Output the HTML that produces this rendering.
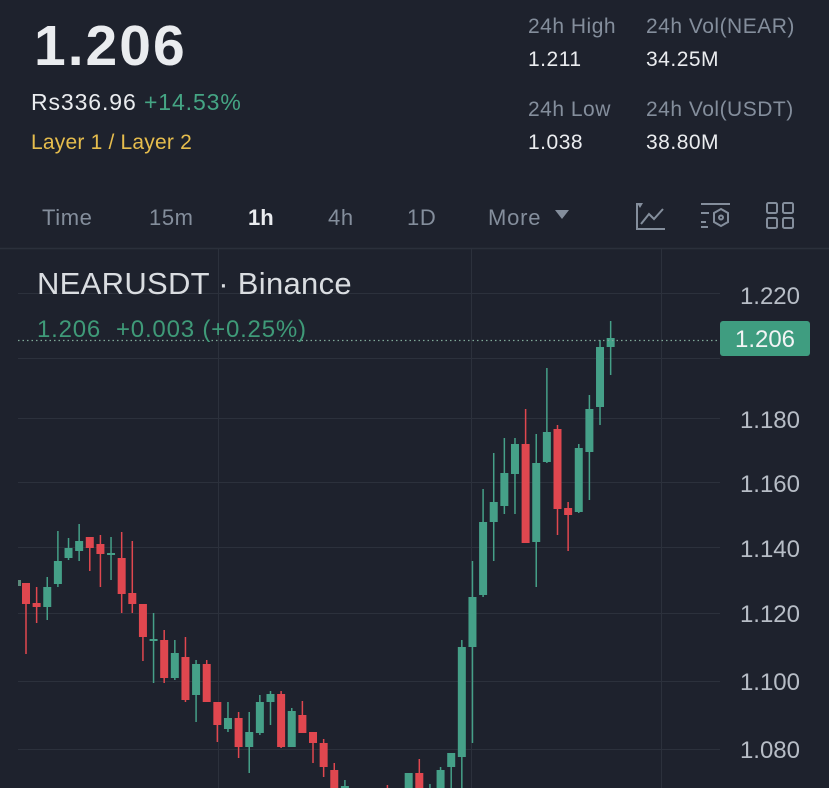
<!DOCTYPE html>
<html><head><meta charset="utf-8">
<style>
body{margin:0;width:829px;height:788px;background:#1e222d;overflow:hidden;font-family:"Liberation Sans",sans-serif;position:relative}
.a{position:absolute;white-space:nowrap}
.g{color:#848e9c}
.s{font-size:21px;letter-spacing:0.5px}
</style></head><body>
<div class="a" style="left:34px;top:13px;font-size:57px;font-weight:bold;color:#eaecef;letter-spacing:2px">1.206</div>
<div class="a" style="left:31px;top:89px;font-size:23px;letter-spacing:0.9px;color:#eaecef">Rs336.96 <span style="color:#45a584">+14.53%</span></div>
<div class="a" style="left:31px;top:131px;font-size:21px;letter-spacing:0.2px;color:#e6bd4d">Layer 1 / Layer 2</div>
<div class="a g s" style="left:528px;top:15px">24h High</div>
<div class="a g s" style="left:646px;top:15px">24h Vol(NEAR)</div>
<div class="a s" style="left:528px;top:48px;color:#eaecef">1.211</div>
<div class="a s" style="left:646px;top:48px;color:#eaecef">34.25M</div>
<div class="a g s" style="left:528px;top:98px">24h Low</div>
<div class="a g s" style="left:646px;top:98px">24h Vol(USDT)</div>
<div class="a s" style="left:528px;top:131px;color:#eaecef">1.038</div>
<div class="a s" style="left:646px;top:131px;color:#eaecef">38.80M</div>

<div class="a g" style="left:42px;top:205px;font-size:22px;letter-spacing:0.6px">Time</div>
<div class="a g" style="left:149px;top:205px;font-size:22px;letter-spacing:0.6px">15m</div>
<div class="a" style="left:248px;top:205px;font-size:22px;color:#eaecef;font-weight:bold">1h</div>
<div class="a g" style="left:328px;top:205px;font-size:22px;letter-spacing:0.6px">4h</div>
<div class="a g" style="left:407px;top:205px;font-size:22px;letter-spacing:0.6px">1D</div>
<div class="a g" style="left:488px;top:205px;font-size:22px;letter-spacing:0.8px">More</div>
<svg class="a" style="left:0;top:0" width="829" height="788">
<polygon points="555,210 569,210 562,219" fill="#848e9c"/>
<g stroke="#848e9c" stroke-width="2" fill="none">
<path d="M637,203 V229 H665 M641,224 L649,214 L654,219 L663,209"/>
<polygon points="637,203 643,203 640,208" fill="#848e9c" stroke="none"/>
<path d="M701,204 H730 M701,213 H709 M701,222 H706 M701,227 H708"/>
<polygon points="721,209 728,213 728,222 721,226 714,222 714,213"/>
<circle cx="721" cy="217.5" r="2"/>
<rect x="767" y="203" width="10" height="10" rx="1.5"/><rect x="783" y="203" width="10" height="10" rx="1.5"/>
<rect x="767" y="218" width="10" height="10" rx="1.5"/><rect x="783" y="218" width="10" height="10" rx="1.5"/>
</g>
<line x1="0" y1="248.5" x2="829" y2="248.5" stroke="#2b303b" stroke-width="1.5"/>
<g stroke="#2c313c" stroke-width="1">
<line x1="218.5" y1="249" x2="218.5" y2="788"/><line x1="471.5" y1="249" x2="471.5" y2="788"/><line x1="661.5" y1="249" x2="661.5" y2="788"/>
<line x1="18" y1="293.5" x2="720" y2="293.5"/><line x1="18" y1="358.5" x2="720" y2="358.5"/>
<line x1="18" y1="418.5" x2="720" y2="418.5"/><line x1="18" y1="482.5" x2="720" y2="482.5"/>
<line x1="18" y1="547.5" x2="720" y2="547.5"/><line x1="18" y1="613.5" x2="720" y2="613.5"/>
<line x1="18" y1="681.5" x2="720" y2="681.5"/><line x1="18" y1="749.5" x2="720" y2="749.5"/>
</g>
<g id="c"></g>
<line x1="18" y1="340.5" x2="720" y2="340.5" stroke="#7fa898" stroke-width="1.2" stroke-dasharray="1.5,3"/>
<rect x="720" y="321" width="90" height="35" rx="3" fill="#3f9d80"/>
<text x="765" y="347" font-size="24" fill="#f2f4f5" text-anchor="middle" font-family="Liberation Sans">1.206</text>
<g font-size="24" fill="#b7bdc6" font-family="Liberation Sans" text-anchor="end">
<text x="800" y="304">1.220</text><text x="800" y="428">1.180</text><text x="800" y="492">1.160</text>
<text x="800" y="557">1.140</text><text x="800" y="622">1.120</text><text x="800" y="690">1.100</text><text x="800" y="758">1.080</text>
</g>
<text x="37" y="294" font-size="31" fill="#dadde1" font-family="Liberation Sans" letter-spacing="0.3">NEARUSDT · Binance</text>
<text x="37" y="337" font-size="24" fill="#3f9a78" font-family="Liberation Sans" xml:space="preserve" letter-spacing="0.8">1.206  +0.003 (+0.25%)</text>
</svg>
<script>
var G='#45a088',R='#e0474f';
var d=[
[0,583,604,583,654,R],[1,603,607,587,623,R],[2,587,607,577,620,G],[3,561,584,531,587,G],[4,548,558,538,560,G],
[5,541,551,524,561,G],[6,537,548,537,571,R],[7,544,554,535,587,R],[8,553,555,537,580,G],[9,558,594,532,613,R],
[10,593,604,541,613,R],[11,604,637,604,661,R],[12,639,641,613,683,G],[13,640,678,630,683,R],[14,653,678,640,680,G],
[15,657,700,637,702,R],[16,664,695,660,722,G],[17,664,702,660,702,R],[18,702,725,702,742,R],[19,718,729,702,732,G],
[20,718,747,712,758,R],[21,732,747,712,773,G],[22,702,733,695,735,G],[23,694,702,691,725,G],[24,694,747,691,748,R],
[25,711,747,708,747,G],[26,715,733,701,733,R],[27,732,743,732,763,R],[28,743,767,739,777,R],[29,770,795,763,795,R],
[30,786,795,780,795,G],[34,790,795,785,795,R],[36,773,795,773,795,G],[37,773,795,759,795,R],[38,790,795,784,795,G],
[39,770,795,767,795,G],[40,753,767,753,790,G],[41,647,757,640,790,G],[42,597,647,561,743,G],[43,522,595,489,597,G],
[44,502,522,453,561,G],[45,473,506,438,514,G],[46,444,474,438,514,G],[47,444,543,409,543,R],[48,463,542,434,587,G],
[49,432,462,368,463,G],[50,429,509,425,535,R],[51,508,515,502,551,R],[52,448,512,444,513,G],[53,409,452,395,500,G],
[54,347,407,340,425,G],[55,338,347,321,375,G]];
var s='<rect x="18" y="580" width="3" height="6" fill="#5a8a7a"/>';d.forEach(function(c){var x=26+10.63*c[0];
s+='<line x1="'+x+'" x2="'+x+'" y1="'+c[3]+'" y2="'+c[4]+'" stroke="'+c[5]+'" stroke-width="1.5"/>';
s+='<rect x="'+(x-4)+'" y="'+c[1]+'" width="8" height="'+Math.max(2,c[2]-c[1])+'" fill="'+c[5]+'"/>';});
document.getElementById('c').innerHTML=s;
</script>
</body></html>
